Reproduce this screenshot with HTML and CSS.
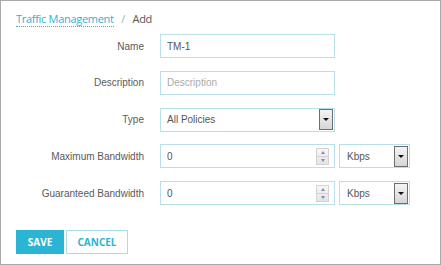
FILE: index.html
```html
<!DOCTYPE html>
<html lang="en">
<head>
    <meta charset="UTF-8">
    <title>Traffic Management - Add</title>
    <link rel="stylesheet" href="styles.css">
</head>
<body>
    <div class="panel">
        <div class="breadcrumb">
            <a href="#" class="crumb-link">Traffic Management</a>
            <span class="crumb-sep">/</span>
            <span class="crumb-current">Add</span>
        </div>

        <form class="tm-form">
            <div class="form-row">
                <label for="name">Name</label>
                <div class="field">
                    <input type="text" id="name" value="TM-1">
                </div>
            </div>
            <div class="form-row">
                <label for="description">Description</label>
                <div class="field">
                    <input type="text" id="description" placeholder="Description">
                </div>
            </div>
            <div class="form-row">
                <label for="type">Type</label>
                <div class="field">
                    <span class="field-value" id="type">All Policies</span>
                    <span class="drop-btn"><span class="tri"></span></span>
                </div>
            </div>
            <div class="form-row">
                <label for="max_bw">Maximum Bandwidth</label>
                <div class="field">
                    <input type="text" id="max_bw" value="0">
                    <span class="spinner"><span class="spin-half"><span class="up"></span></span><span class="spin-half"><span class="down"></span></span></span>
                </div>
                <div class="field unit">
                    <span class="field-value">Kbps</span>
                    <span class="drop-btn"><span class="tri"></span></span>
                </div>
            </div>
            <div class="form-row">
                <label for="gua_bw">Guaranteed Bandwidth</label>
                <div class="field">
                    <input type="text" id="gua_bw" value="0">
                    <span class="spinner"><span class="spin-half"><span class="up"></span></span><span class="spin-half"><span class="down"></span></span></span>
                </div>
                <div class="field unit">
                    <span class="field-value">Kbps</span>
                    <span class="drop-btn"><span class="tri"></span></span>
                </div>
            </div>

            <div class="actions">
                <button type="button" class="btn btn-save">SAVE</button>
                <button type="button" class="btn btn-cancel">CANCEL</button>
            </div>
        </form>
    </div>
</body>
</html>
```

FILE: styles.css
```css
body {
    margin: 0;
    padding: 0;
    background-color: #fff;
    font-family: "Liberation Sans", Arial, sans-serif;
}
.panel {
    width: 441px;
    height: 265px;
    box-sizing: border-box;
    border: 1px solid #a9a9a9;
    padding: 10px 0 0 15px;
}
.breadcrumb {
    font-family: "Open Sans", sans-serif;
    font-size: 11px;
    letter-spacing: -0.3px;
    height: 16px;
    line-height: 16px;
}
.crumb-link {
    color: #2fb1d3;
    text-decoration: none;
    border-bottom: 1px dotted #2fb1d3;
}
.crumb-sep {
    color: #aaa;
    margin: 0 5px;
}
.crumb-current {
    color: #555;
}
.tm-form {
    margin-top: 7px;
    margin-left: -15px;
}
.form-row {
    display: flex;
    align-items: center;
    height: 24px;
    margin-bottom: 12.75px;
}
.form-row label {
    width: 143px;
    text-align: right;
    font-size: 10px;
    color: #5a5a5a;
    margin-right: 16px;
}
.field {
    display: flex;
    align-items: center;
    width: 175px;
    height: 24px;
    box-sizing: border-box;
    border: 1px solid #b9e0e8;
    background-color: #fff;
}
.field input, .field-value {
    flex: 1;
    min-width: 0;
    border: none;
    outline: none;
    padding: 0 0 0 6px;
    font-family: "Liberation Sans", Arial, sans-serif;
    font-size: 10px;
    color: #555;
    background: transparent;
}
.field input::placeholder {
    color: #aaa;
}
.field.unit {
    width: 71px;
    margin-left: 4px;
}
.unit .field-value {
    padding-left: 7px;
}
.drop-btn {
    width: 12px;
    height: 19px;
    margin-right: 1px;
    border: 1px solid #6e6e6e;
    background: linear-gradient(#f4f4f4, #d6d6d6);
    display: flex;
    align-items: center;
    justify-content: center;
}
.tri {
    width: 0;
    height: 0;
    border-left: 3px solid transparent;
    border-right: 3px solid transparent;
    border-top: 3px solid #111;
}
.spinner {
    width: 11px;
    height: 15px;
    margin-right: 5px;
    border: 1px solid #d3d3d3;
    background: linear-gradient(#f7f7f7, #e4e4e4);
    display: flex;
    flex-direction: column;
}
.spin-half {
    flex: 1;
    display: flex;
    align-items: center;
    justify-content: center;
}
.spin-half + .spin-half {
    border-top: 1px solid #d3d3d3;
}
.spinner .up, .spinner .down {
    width: 0;
    height: 0;
    border-left: 2.5px solid transparent;
    border-right: 2.5px solid transparent;
}
.spinner .up {
    border-bottom: 3px solid #7b8fa6;
}
.spinner .down {
    border-top: 3px solid #7b8fa6;
}
.actions {
    display: flex;
    gap: 2px;
    margin-left: 15px;
    margin-top: 25px;
}
.btn {
    height: 24px;
    box-sizing: border-box;
    font-family: "Open Sans", sans-serif;
    font-weight: bold;
    font-size: 10px;
    padding: 0 10px;
    border: 1px solid #2bb5d2;
    cursor: pointer;
}
.btn-save {
    width: 48px;
    background-color: #2bb5d2;
    color: #fff;
}
.btn-cancel {
    width: 62px;
    background-color: #fff;
    color: #2bb5d2;
    border-color: #a8dde9;
}
```
